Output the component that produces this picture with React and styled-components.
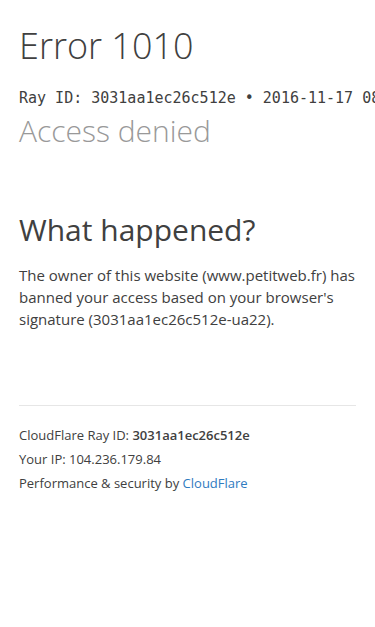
import React from "react";
import styled, { createGlobalStyle } from "styled-components";

const GlobalStyle = createGlobalStyle`
  html, body {
    margin: 0;
    padding: 0;
    background: #fff;
  }
  body {
    font-family: "Open Sans", "Liberation Sans", sans-serif;
    color: #404040;
  }
`;

const Wrapper = styled.div`
  padding: 0 19px;
`;

const Header = styled.header`
  padding-top: 22px;
`;

const Title = styled.h1`
  margin: 0;
  font-size: 36px;
  font-weight: 300;
  line-height: 48px;
  color: #404040;
`;

const RayLine = styled.div`
  margin-top: 18px;
  font-family: "DejaVu Sans Mono", "Liberation Mono", monospace;
  font-size: 15px;
  line-height: 20px;
  white-space: nowrap;
  color: #404040;
`;

const Subtitle = styled.h2`
  margin: 0;
  font-size: 30px;
  font-weight: 300;
  line-height: 46px;
  color: #999;
`;

const Section = styled.section`
  margin-top: 56px;
`;

const SectionTitle = styled.h2`
  margin: 0 0 14px;
  font-size: 30px;
  font-weight: 400;
  line-height: 40px;
  color: #404040;
`;

const Paragraph = styled.p`
  margin: 0;
  font-size: 15px;
  line-height: 22px;
  color: #404040;
`;

const Footer = styled.footer`
  margin-top: 75px;
  border-top: 1px solid #e6e6e6;
  padding-top: 17px;
`;

const FooterLine = styled.p`
  margin: 0;
  font-size: 13px;
  line-height: 24px;
  color: #404040;
`;

const Strong = styled.strong`
  font-weight: 600;
`;

const Link = styled.a`
  color: #2f7bbf;
  text-decoration: none;
`;

export default function App() {
  return (
    <>
      <GlobalStyle />
      <Wrapper>
        <Header>
          <Title>Error 1010</Title>
          <RayLine>Ray ID: 3031aa1ec26c512e &bull; 2016-11-17 08:37:46 UTC</RayLine>
          <Subtitle>Access denied</Subtitle>
        </Header>
        <Section>
          <SectionTitle>What happened?</SectionTitle>
          <Paragraph>
            The owner of this website (www.petitweb.fr) has banned your access
            based on your browser's signature (3031aa1ec26c512e-ua22).
          </Paragraph>
        </Section>
        <Footer>
          <FooterLine>
            CloudFlare Ray ID: <Strong>3031aa1ec26c512e</Strong>
          </FooterLine>
          <FooterLine>Your IP: 104.236.179.84</FooterLine>
          <FooterLine>
            Performance &amp; security by <Link href="#">CloudFlare</Link>
          </FooterLine>
        </Footer>
      </Wrapper>
    </>
  );
}
